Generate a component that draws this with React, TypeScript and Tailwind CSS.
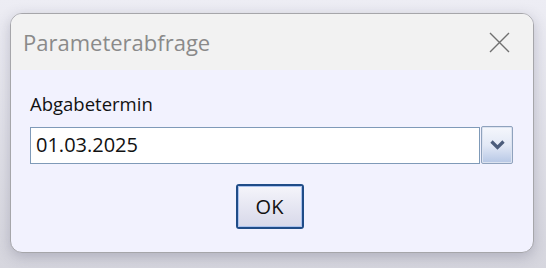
import React from 'react';

const font = { fontFamily: '"Open Sans", "Noto Sans", "Liberation Sans", sans-serif' };

export default function App() {
  return (
    <div
      className="w-[546px] h-[268px] bg-gradient-to-b from-[#ededf4] to-[#d6d6de] pt-[13px] pl-[10px]"
      style={font}
    >
      <div className="w-[524px] h-[240px] rounded-[12px] border border-[#a6a6aa] bg-[#f2f2fe] overflow-hidden flex flex-col shadow-[0_4px_14px_rgba(60,60,90,0.25)]">
        {/* title bar */}
        <div className="h-[56px] bg-[#f2f2f2] flex items-center justify-between pl-[12px] pr-[23px] shrink-0">
          <span className="text-[22px] text-[#8a8a8a] leading-none">Parameterabfrage</span>
          <svg width="21" height="21" viewBox="0 0 21 21" className="text-[#707070]">
            <path d="M1 1 L20 20 M20 1 L1 20" stroke="currentColor" strokeWidth="1.4" fill="none" />
          </svg>
        </div>

        {/* body */}
        <div className="flex flex-col pl-[19px] pr-[20px] pt-[22px]">
          <label className="text-[18.5px] text-[#111] leading-[24px] mb-[10px]">Abgabetermin</label>
          <div className="flex items-center">
            <div className="w-[451px] h-[37px] bg-white border border-[#7f9ab8] flex items-center pl-[5px] text-[20px] text-[#111]">
              01.03.2025
            </div>
            <div className="w-[32px] h-[38px] ml-[1px] rounded-[2px] border border-[#8fa2bd] p-[1px] bg-[#dce3f0]">
              <div className="w-full h-full bg-gradient-to-b from-[#f4f6fc] via-[#e3e9f6] to-[#b9c9e6] flex items-center justify-center">
                <svg width="15" height="10" viewBox="0 0 15 10">
                  <path d="M1.5 1.5 L7.5 7.5 L13.5 1.5" stroke="#4b5c7b" strokeWidth="3.2" fill="none" />
                </svg>
              </div>
            </div>
          </div>
          <div className="flex justify-center mt-[20px] pr-[4px]">
            <button className="w-[68px] h-[45px] rounded-[3px] border-2 border-[#1f4c88] p-0">
              <div className="w-full h-full rounded-[1px] border border-[#aac2ee] bg-gradient-to-b from-[#f4f4fa] to-[#d8d9ea] flex items-center justify-center text-[20px] text-[#111]">
                OK
              </div>
            </button>
          </div>
        </div>
      </div>
    </div>
  );
}
